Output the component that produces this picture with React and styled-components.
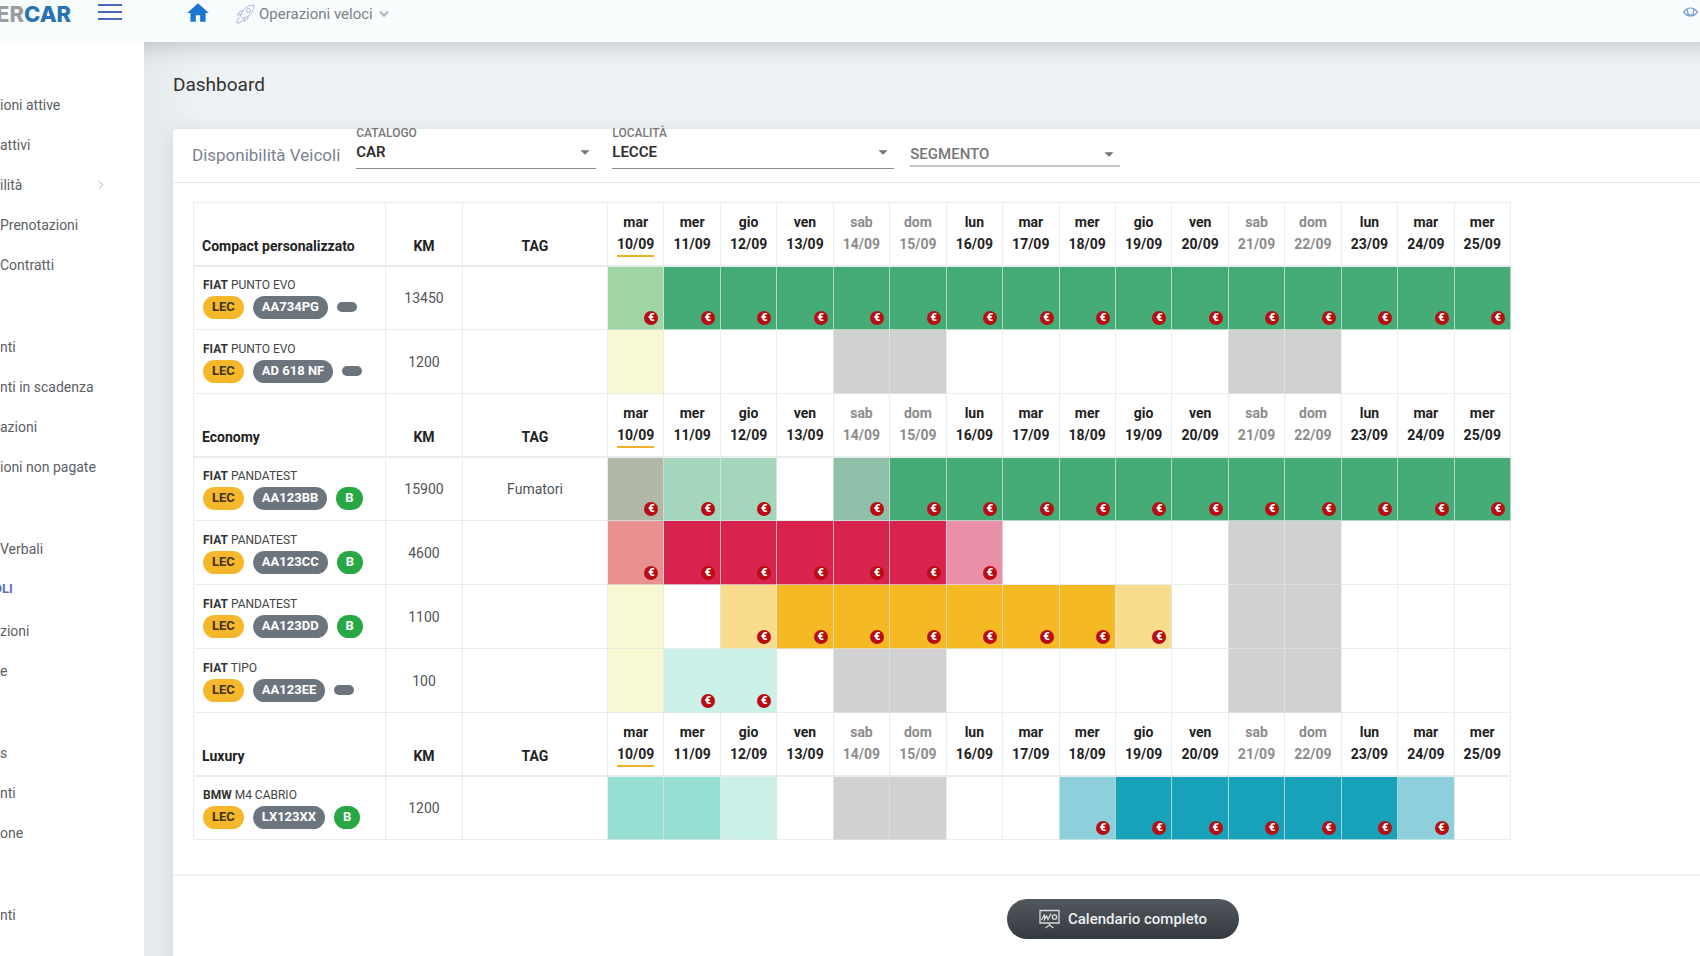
import { createGlobalStyle, styled } from 'styled-components'
import { MdHome, MdArrowDropDown } from 'react-icons/md'
import { ChevronDown, ChevronRight } from 'lucide-react'

const GlobalStyle = createGlobalStyle`
    * {
        box-sizing: border-box;
    }

    body {
        margin: 0;
        font-family: Roboto, 'Liberation Sans', sans-serif;
        font-size: 14px;
        color: #4f5459;
        background-color: #eef2f4;
        overflow: hidden;
    }
`

const menu = [
    { label: 'ioni attive' },
    { label: 'attivi' },
    { label: 'ilità', arrow: true },
    { label: 'Prenotazioni' },
    { label: 'Contratti' },
    { gap: true },
    { label: 'nti' },
    { label: 'nti in scadenza' },
    { label: 'azioni' },
    { label: 'ioni non pagate' },
    { gap: true },
    { label: 'Verbali' },
    { label: 'OLI', heading: true },
    { label: 'zioni' },
    { label: 'e' },
    { gap: true },
    { label: 's' },
    { label: 'nti' },
    { label: 'one' },
    { gap: true },
    { label: 'nti' },
]

const weekdays = ['mar', 'mer', 'gio', 'ven', 'sab', 'dom', 'lun']

const days = Array.from({ length: 16 }, (_, i) => ({
    name: weekdays[i % 7],
    date: `${10 + i}/09`,
    today: i === 0,
    weekend: i % 7 === 4 || i % 7 === 5,
}))

const colors = {
    green: '#46ac77',
    greenToday: '#9fd5a4',
    greenHalf: '#a3d6bc',
    greenWeekend: '#8fbfa8',
    greenDark: '#b1b8a8',
    red: '#d9234f',
    redToday: '#e99190',
    redHalf: '#e98fa7',
    yellow: '#f5b923',
    yellowHalf: '#fadc8f',
    mint: '#97dfd2',
    mintHalf: '#cbf0e8',
    cyan: '#18a2b9',
    cyanHalf: '#8dd0dc',
    today: '#f8f9d3',
    weekend: '#d1d1d1',
    free: '#ffffff',
}

// spans: [first day, last day, color, paid icon hidden]
const groups = [
    {
        name: 'Compact personalizzato',
        vehicles: [
            { brand: 'FIAT', model: 'PUNTO EVO', plate: 'AA734PG', km: 13450, spans: [[10, 10, 'greenToday'], [11, 25, 'green']] },
            { brand: 'FIAT', model: 'PUNTO EVO', plate: 'AD 618 NF', km: 1200, spans: [] },
        ],
    },
    {
        name: 'Economy',
        vehicles: [
            { brand: 'FIAT', model: 'PANDATEST', plate: 'AA123BB', km: 15900, fuel: 'B', tag: 'Fumatori', spans: [[10, 10, 'greenDark'], [11, 12, 'greenHalf'], [14, 14, 'greenWeekend'], [15, 25, 'green']] },
            { brand: 'FIAT', model: 'PANDATEST', plate: 'AA123CC', km: 4600, fuel: 'B', spans: [[10, 10, 'redToday'], [11, 15, 'red'], [16, 16, 'redHalf']] },
            { brand: 'FIAT', model: 'PANDATEST', plate: 'AA123DD', km: 1100, fuel: 'B', spans: [[12, 12, 'yellowHalf'], [13, 18, 'yellow'], [19, 19, 'yellowHalf']] },
            { brand: 'FIAT', model: 'TIPO', plate: 'AA123EE', km: 100, spans: [[11, 12, 'mintHalf']] },
        ],
    },
    {
        name: 'Luxury',
        vehicles: [
            { brand: 'BMW', model: 'M4 CABRIO', plate: 'LX123XX', km: 1200, fuel: 'B', spans: [[10, 11, 'mint', true], [12, 12, 'mintHalf', true], [18, 18, 'cyanHalf'], [19, 23, 'cyan'], [24, 24, 'cyanHalf']] },
        ],
    },
]

const App = () => {
    return <>
        <GlobalStyle />
        <Page>
            <TopBar />
            <Body>
                <Sidebar />
                <Main>
                    <Title>Dashboard</Title>
                    <Card>
                        <Filters />
                        <CardBody>
                            <Availability />
                        </CardBody>
                        <CardFooter>
                            <CalendarButton type="button"><BoardIcon />Calendario completo</CalendarButton>
                        </CardFooter>
                    </Card>
                </Main>
            </Body>
        </Page>
    </>
}

const Page = styled.div`
    display: flex;
    flex-direction: column;
    height: 100vh;
    overflow: hidden;
`

const Body = styled.div`
    display: flex;
    flex: 1;
    min-height: 0;
`

const Main = styled.main`
    flex: 1;
    min-width: 0;
    display: flex;
    flex-direction: column;
    padding-left: 29px;
    background: linear-gradient(90deg, #e5eaed, #eef2f4 60px);
`

const Title = styled.h1`
    margin: 0;
    padding: 31px 0px 32px;
    font-size: 19px;
    line-height: 24px;
    font-weight: 400;
    color: #333;
`

/* the card is wider than the window and runs out on the right */
const Card = styled.section`
    flex: 1;
    margin-right: -373px;
    border-radius: 4px;
    background-color: #fff;
    box-shadow: 0px 4px 20px rgba(60, 80, 90, .16);
`

const CardBody = styled.div`
    padding: 19px 20px 34px;
`

const CardFooter = styled.div`
    display: flex;
    justify-content: center;
    padding: 23px;
    border-top: 2px solid #f0f1f2;
`

const CalendarButton = styled.button`
    display: flex;
    align-items: center;
    gap: 8px;
    height: 40px;
    padding: 0px 32px;
    border: none;
    border-radius: 20px;
    font-family: inherit;
    font-size: 15px;
    line-height: 20px;
    font-weight: 500;
    color: #eceeef;
    background: linear-gradient(#51575d, #343a40);
    cursor: pointer;
`

const TopBar = () => {
    return <Header>
        <Brand>
            <Logo>ER<LogoBlue>CAR</LogoBlue></Logo>
            <MenuButton type="button" aria-label="Menu"><MenuLine /><MenuLine /><MenuLine /></MenuButton>
        </Brand>
        <HomeLink href="#" aria-label="Home"><MdHome size={26} /></HomeLink>
        <QuickButton type="button">
            <RocketIcon />
            Operazioni veloci
            <ChevronDown size={14} strokeWidth={4} color="#b3b8bd" />
        </QuickButton>
        <EyeButton type="button" aria-label="Mostra"><EyeIcon /></EyeButton>
    </Header>
}

const Header = styled.header`
    display: flex;
    align-items: flex-start;
    height: 42px;
    background-color: #f8fcfd;
    box-shadow: 0px -8px 20px 12px rgba(50, 65, 75, .25);
    z-index: 1;
`

const Brand = styled.div`
    display: flex;
    justify-content: space-between;
    width: 144px;
    padding-right: 22px;
`

const Logo = styled.div`
    margin-left: -4px;
    font-family: Inter, sans-serif;
    font-size: 22px;
    line-height: 28px;
    font-weight: 800;
    color: #9b9d9e;
`

const LogoBlue = styled.span`
    color: #2773b3;
`

const MenuButton = styled.button`
    display: flex;
    flex-direction: column;
    gap: 5px;
    width: 24px;
    padding: 4px 0px;
    border: none;
    background: none;
    cursor: pointer;
`

const MenuLine = styled.span`
    height: 2px;
    background-color: #4a68b8;
`

const HomeLink = styled.a`
    display: flex;
    margin-left: 41px;
    color: #1976d2;
`

const QuickButton = styled.button`
    display: flex;
    align-items: center;
    gap: 4px;
    height: 27px;
    margin-left: 25px;
    padding: 0px;
    border: none;
    background: none;
    font-family: inherit;
    font-size: 15px;
    color: #7b8085;
    cursor: pointer;
`

const EyeButton = styled.button`
    display: flex;
    margin-left: auto;
    padding: 4px 2px;
    border: none;
    background: none;
    cursor: pointer;
`

const RocketIcon = () => (
    <svg width="19" height="20" viewBox="0 0 19 20" fill="none" stroke="#a9b3e3" strokeWidth="1">
        <path d="M18 1C13 1 9 3.500 6.500 7.500L4.500 12L7 14.500L11.500 12.500C15.500 10 18 6 18 1Z" />
        <circle cx="12.500" cy="6.500" r="2" />
        <path d="M7.500 6.500L4 7.500L1.500 11L5.500 10.500M12.500 11.500L11.500 15L8 17.500L8.500 13.500" />
        <path d="M4 13.500C1.500 14 1 16 1 19C4 19 6 18 6.500 15.500" />
    </svg>
)

const EyeIcon = () => (
    <svg width="15" height="16" viewBox="0 0 15 16" fill="none" stroke="#6fa0d4" strokeWidth="1.200">
        <path d="M.5 8C3 5 5 4 7.500 4S12 5 14.500 8C12 11 10 12 7.500 12S3 11 .5 8Z" />
        <path d="M4.500 4.800C3.500 8 5 11 7.500 11S11.500 8 10.500 4.800" />
    </svg>
)

const BoardIcon = () => (
    <svg width="21" height="20" viewBox="0 0 21 20" fill="none" stroke="#d7dadc" strokeWidth="1.300">
        <path d="M1 1.500H20V14H1Z" />
        <path d="M2.500 11L5.500 5.500V10.500L7.500 7L9 10.500L12 4.500" />
        <circle cx="15.500" cy="8" r="2.200" />
        <path d="M10.500 14V16.500M6.500 19L10.500 16L14.500 19" />
    </svg>
)

const Sidebar = () => {
    return <Aside>
        <Nav>
            {menu.map((e, i) => {
                if (e.gap) return <MenuGap key={i} />
                if (e.heading) return <MenuHeading key={i}>{e.label}</MenuHeading>
                return <MenuItem key={i} href="#">
                    {e.label}
                    {e.arrow && <ChevronRight size={14} strokeWidth={2} color="#d0d3d6" />}
                </MenuItem>
            })}
        </Nav>
    </Aside>
}

const Aside = styled.aside`
    width: 144px;
    padding-top: 43px;
    background-color: #fff;
    z-index: 2;
`

const Nav = styled.nav`
    display: flex;
    flex-direction: column;
    padding-right: 36px;
`

const MenuItem = styled.a`
    display: flex;
    align-items: center;
    justify-content: space-between;
    height: 40px;
    line-height: 20px;
    color: #5b6066;
    text-decoration: none;
    white-space: nowrap;
`

const MenuHeading = styled.div`
    height: 42px;
    margin-left: -7px;
    line-height: 40px;
    font-size: 13px;
    font-weight: 700;
    color: #5f6fb8;
`

const MenuGap = styled.div`
    height: 42px;
`

const Filters = () => {
    return <CardHeader>
        <CardTitle>Disponibilità Veicoli</CardTitle>
        <Filter label="CATALOGO" value="CAR" width="240px" />
        <Filter label="LOCALITÀ" value="LECCE" width="282px" />
        <Filter placeholder="SEGMENTO" width="210px" />
    </CardHeader>
}

const Filter = (props) => {
    const { label, value, placeholder, width } = props
    const id = `filter-${(label || placeholder).toLowerCase()}`

    return <Field width={width}>
        {label && <FieldLabel htmlFor={id}>{label}</FieldLabel>}
        <SelectRow $empty={!value}>
            <Select id={id} aria-label={placeholder} $empty={!value}>
                <option>{value || placeholder}</option>
            </Select>
            <MdArrowDropDown size={22} color="#757575" />
        </SelectRow>
    </Field>
}

const CardHeader = styled.div`
    display: flex;
    align-items: flex-start;
    gap: 16px;
    height: 54px;
    padding-left: 19px;
    border-bottom: 1px solid #e6e8e9;
`

const CardTitle = styled.h2`
    margin: 0;
    padding-top: 14px;
    font-size: 17px;
    line-height: 24px;
    font-weight: 400;
    color: #7b8290;
    white-space: nowrap;
`

const Field = styled.div`
    display: flex;
    flex-direction: column;
    width: ${props => props.width};
`

const FieldLabel = styled.label`
    height: 8px;
    font-size: 12px;
    line-height: 8px;
    font-weight: 500;
    color: #777;
`

const SelectRow = styled.div`
    display: grid;
    align-items: center;
    height: ${props => props.$empty ? '24px' : '32px'};
    margin-top: ${props => props.$empty ? '14px' : '0px'};
    padding-bottom: ${props => props.$empty ? '0px' : '2px'};
    border-bottom: ${props => props.$empty ? '2px solid #c4c6c8' : '1px solid #8a8d90'};

    > * {
        grid-area: 1 / 1;
    }

    > svg {
        justify-self: end;
        pointer-events: none;
    }
`

const Select = styled.select`
    appearance: none;
    width: 100%;
    padding: 0px;
    border: none;
    background: none;
    font-family: inherit;
    font-size: 15px;
    font-weight: ${props => props.$empty ? 500 : 600};
    color: ${props => props.$empty ? '#777' : '#2d2d2d'};
`

const dayColor = (span, day) => {
    if (span) return colors[span[2]]
    if (day.today) return colors.today
    if (day.weekend) return colors.weekend
    return colors.free
}

const Availability = () => {
    return <Table>
        <colgroup>
            <Col width="192px" />
            <Col width="77px" />
            <Col width="145px" />
            {days.map(d => <col key={d.date} />)}
        </colgroup>
        {groups.map(g => <tbody key={g.name}>
            <tr>
                <HeadCell $left scope="col">{g.name}</HeadCell>
                <HeadCell scope="col">KM</HeadCell>
                <HeadCell scope="col">TAG</HeadCell>
                {days.map(d => <HeadCell key={d.date} scope="col" $weekend={d.weekend}>
                    {d.name}<br /><DayDate $today={d.today}>{d.date}</DayDate>
                </HeadCell>)}
            </tr>
            {g.vehicles.map(v => <VehicleRow key={v.plate} data={v} />)}
        </tbody>)}
    </Table>
}

const VehicleRow = (props) => {
    const data = props.data

    return <tr>
        <NameCell>
            <VehicleName><b>{data.brand}</b> {data.model}</VehicleName>
            <Badges>
                <Badge $type="place">LEC</Badge>
                <Badge>{data.plate}</Badge>
                {data.fuel ? <Badge $type="fuel">{data.fuel}</Badge> : <EmptyBadge />}
            </Badges>
        </NameCell>
        <Cell>{data.km}</Cell>
        <Cell>{data.tag}</Cell>
        {days.map((d, i) => {
            const span = data.spans.find(s => i + 10 >= s[0] && i + 10 <= s[1])
            return <DayCell key={d.date} $color={dayColor(span, d)}>
                {span && !span[3] && <Euro>€</Euro>}
            </DayCell>
        })}
    </tr>
}

const Table = styled.table`
    width: 1318px;
    table-layout: fixed;
    border-collapse: collapse;
`

const Col = styled.col`
    width: ${props => props.width};
`

const HeadCell = styled.th`
    height: 63px;
    padding: ${props => props.$left ? '0px 8px 8px' : '0px 0px 8px'};
    border: 1px solid #e8eced;
    border-bottom-width: 2px;
    vertical-align: bottom;
    text-align: ${props => props.$left ? 'left' : 'center'};
    font-weight: 700;
    line-height: 22px;
    color: ${props => props.$weekend ? '#8c8c8c' : '#222'};
`

const DayDate = styled.span`
    display: inline-block;
    border-bottom: 2px solid ${props => props.$today ? '#efb02c' : 'transparent'};
`

const Cell = styled.td`
    height: 64px;
    padding: 0px;
    border: 1px solid #e8eced;
    text-align: center;
`

const NameCell = styled(Cell)`
    padding: 0px 9px;
    text-align: left;
`

const DayCell = styled(Cell)`
    padding: 0px 5px 4px;
    border-color: rgba(222, 232, 230, .7);
    vertical-align: bottom;
    text-align: right;
    background-color: ${props => props.$color};
    background-clip: padding-box;
`

const Euro = styled.span`
    display: inline-block;
    width: 14px;
    height: 14px;
    border-radius: 50%;
    font-size: 11px;
    line-height: 14px;
    font-weight: 900;
    text-align: center;
    vertical-align: bottom;
    color: #fff;
    background-color: #b80d12;
`

const VehicleName = styled.div`
    font-size: 12px;
    line-height: 16px;
    color: #444;

    b {
        font-weight: 700;
        color: #333;
    }
`

const Badges = styled.div`
    display: flex;
    align-items: center;
    gap: 9px;
    margin-top: 3px;
`

const badgeColors = {
    place: '#f5b82a',
    fuel: '#28a745',
}

const Badge = styled.span`
    height: 23px;
    padding: 0px 9px;
    border-radius: 12px;
    font-size: 13px;
    line-height: 22px;
    font-weight: 700;
    color: ${props => props.$type === 'place' ? '#3f3314' : '#fff'};
    background-color: ${props => badgeColors[props.$type] || '#6c757d'};
`

const EmptyBadge = styled.span`
    width: 20px;
    height: 10px;
    border-radius: 5px;
    background-color: #6c757d;
`

export default App
